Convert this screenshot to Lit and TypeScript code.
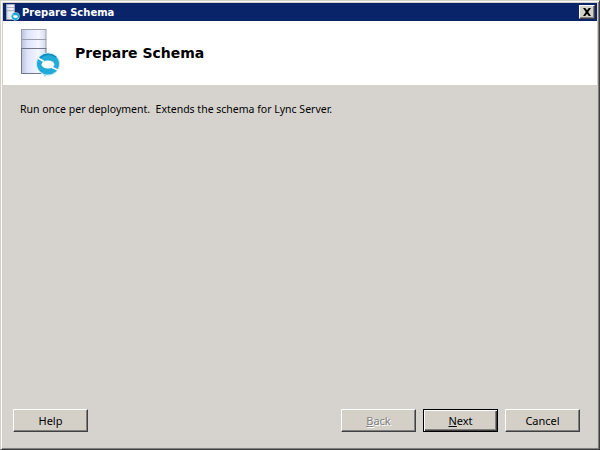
import { LitElement, html, css } from "lit";
import { customElement } from "lit/decorators.js";

const serverIcon = (w: number, h: number, id: string) => html`<svg class="ico" width="${w}" height="${h}" viewBox="0 0 40 48">
  <defs>
    <linearGradient id="${id}" x1="0" y1="0" x2="1" y2="0"><stop offset="0" stop-color="#b9c3e2"/><stop offset="0.25" stop-color="#dfe4f8"/><stop offset="0.7" stop-color="#f4f6ff"/><stop offset="1" stop-color="#d3d9ee"/></linearGradient>
  </defs>
  <rect x="0.5" y="0.5" width="24.500" height="10" fill="url(#${id})" stroke="#9a9eac"/>
  <rect x="0.5" y="10.500" width="24.500" height="9" fill="url(#${id})" stroke="#9a9eac"/>
  <rect x="0.5" y="19.500" width="24.500" height="25" fill="url(#${id})" stroke="#737888"/>
  <path d="M24 47.500 L21 43 L25 44 Z" fill="#2cb2dc" stroke="#8fd3ea" stroke-width="1"/>
  <ellipse cx="27" cy="35" rx="12" ry="11.500" fill="#bfe8f5"/>
  <ellipse cx="27" cy="35" rx="11" ry="10.500" fill="#22aad8"/>
  <ellipse cx="27" cy="35.500" rx="6.500" ry="4" fill="#fff"/>
  <path d="M17 29 L23 32.500" stroke="#fff" stroke-width="1.500" fill="none"/>
  <path d="M37 41 L31 38.500" stroke="#fff" stroke-width="1.500" fill="none"/>
  <path d="M19 29 A11 10 0 0 1 35 28" stroke="#0d86b8" stroke-width="1.200" fill="none"/>
</svg>`;

@customElement("app-root")
export class AppRoot extends LitElement {
  static styles = css`
    :host {
      display: block;
      width: 600px;
      height: 450px;
      font-family: "Noto Sans", sans-serif;
      font-size: 11px;
      color: #000;
    }
    .win {
      box-sizing: border-box;
      width: 600px;
      height: 450px;
      display: flex;
      flex-direction: column;
      background: #d4d0c8;
      border-style: solid;
      border-width: 1px;
      border-color: #d4d0c8 #404040 #404040 #d4d0c8;
      box-shadow: inset 1px 1px 0 #fff, inset -1px -1px 0 #808080;
      padding: 2px;
    }
    .title {
      height: 18px;
      flex: none;
      background: #0a246a;
      color: #fff;
      font-family: "DejaVu Sans", sans-serif;
      font-weight: bold;
      font-size: 10px;
      display: flex;
      align-items: center;
      padding-right: 2px;
    }
    .title .ico { margin: 0 2px 0 3px; }
    .title .t { flex: 1; }
    .x {
      box-sizing: border-box;
      width: 16px;
      height: 14px;
      background: #d4d0c8;
      border: 1px solid;
      border-color: #fff #404040 #404040 #fff;
      box-shadow: inset -1px -1px 0 #808080;
      display: flex;
      align-items: center;
      justify-content: center;
    }
    .head {
      height: 64px;
      flex: none;
      background: #fff;
      display: flex;
      align-items: center;
      padding-left: 18px;
      gap: 14px;
    }
    .head h1 {
      margin: 0;
      font-family: "DejaVu Sans", sans-serif;
      font-size: 14px;
      font-weight: bold;
    }
    .body {
      flex: 1;
      background: #d6d3ce;
      padding-top: 17px;
      display: flex;
      flex-direction: column;
    }
    .body p { margin: 0 0 0 17px; white-space: pre; font-size: 10.5px; line-height: 15px; }
    .spacer { flex: 1; }
    .btns {
      display: flex;
      padding: 0 17px 15px 10px;
      gap: 7px;
    }
    .btns .gap { flex: 1; }
    button {
      box-sizing: border-box;
      width: 75px;
      height: 23px;
      font: inherit;
      padding: 0;
      background: #d4d0c8;
      color: #000;
      border: 1px solid;
      border-color: #fff #404040 #404040 #fff;
      box-shadow: inset -1px -1px 0 #808080;
    }
    button.dis { color: #808080; text-shadow: 1px 1px 0 #fff; }
    button.def {
      border: 1px solid #000;
      box-shadow: inset 1px 1px 0 #fff, inset -1px -1px 0 #404040, inset -2px -2px 0 #808080;
    }
    u { text-underline-offset: 1px; }
  `;

  render() {
    return html`<div class="win">
      <div class="title">
        ${serverIcon(14, 17, "sa")}
        <span class="t">Prepare Schema</span>
        <span class="x"><svg width="10" height="8" viewBox="0 0 10 8"><path d="M1 0h2.200L5 2.200 6.800 0H9L6.200 4 9 8H6.800L5 5.800 3.200 8H1l2.800-4z" fill="#000"/></svg></span>
      </div>
      <div class="head">
        ${serverIcon(40, 48, "sb")}
        <h1>Prepare Schema</h1>
      </div>
      <div class="body">
        <p>Run once per deployment.  Extends the schema for Lync Server.</p>
        <div class="spacer"></div>
        <div class="btns">
          <button>Help</button>
          <div class="gap"></div>
          <button class="dis"><u>B</u>ack</button>
          <button class="def"><u>N</u>ext</button>
          <button>Cancel</button>
        </div>
      </div>
    </div>`;
  }
}
